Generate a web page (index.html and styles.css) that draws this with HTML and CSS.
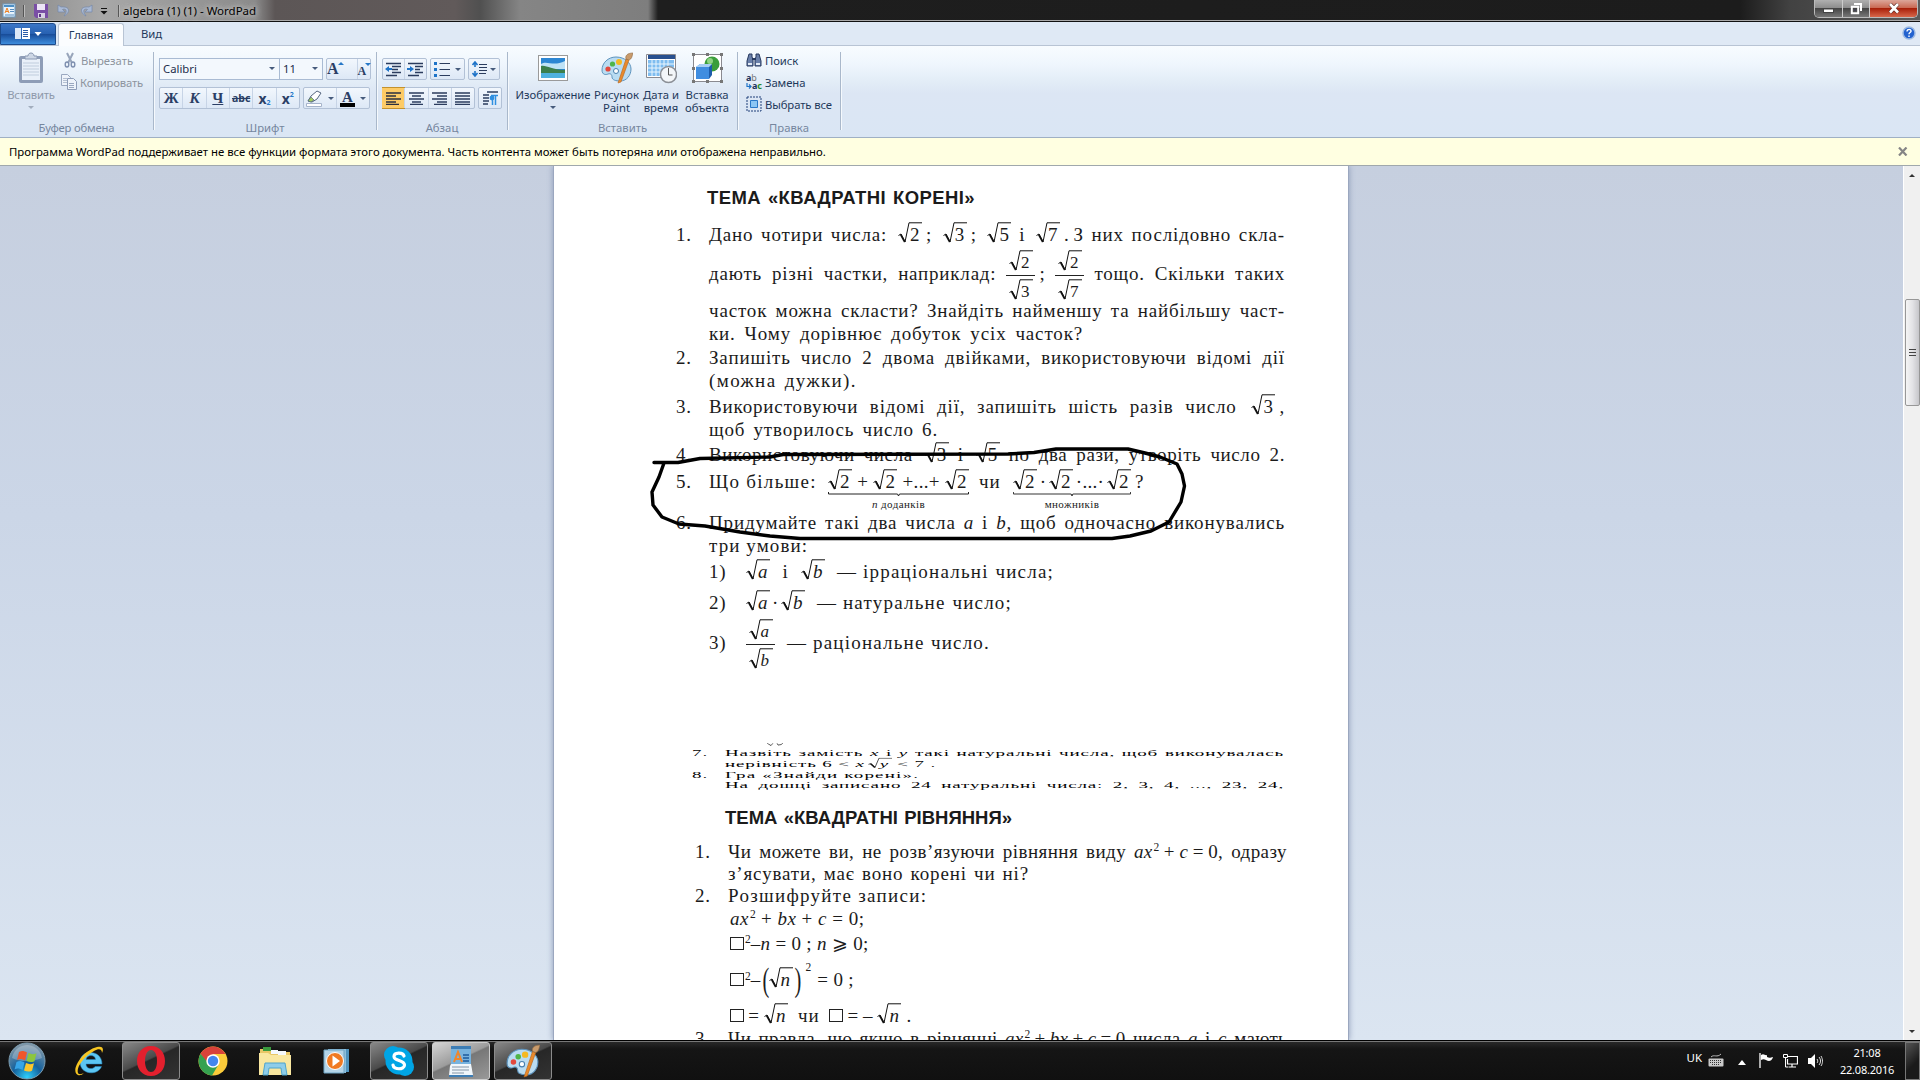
FILE: index.html
```html
<!DOCTYPE html>
<html lang="uk">
<head>
    <meta charset="UTF-8">
    <title>algebra (1) (1) - WordPad</title>
    <link rel="stylesheet" href="styles.css">
</head>
<body>
    <svg class="defs" width="0" height="0">
        <defs>
            <symbol id="root" viewBox="0 0 24 21"><path d="M.5 13.5 3 12l4 8L11 .8h13" fill="none" stroke="#111" stroke-width="1"/><path d="M2.6 12.4 6.8 20" stroke="#111" stroke-width="1.8"/></symbol>
            <symbol id="palette" viewBox="0 0 32 32"><path d="M15 5C7 5 1 11 1 18c0 5 4 5 6 4 3-1 4 1 4 3 0 3 4 4 8 4 7 0 11-6 11-12S24 5 15 5z" fill="#b9dcf2" stroke="#5d93bd"/><circle cx="7" cy="17" r="2.6" fill="#e2483d"/><circle cx="11.500" cy="12" r="2.600" fill="#4fb548"/><circle cx="18" cy="10" r="3" fill="#f5b921"/><circle cx="15" cy="19" r="2.500" fill="#fff" stroke="#4a80ae"/><path d="M17 31l3-1 8-22-3-1z" fill="#e98a2c" stroke="#b5651b" stroke-width=".6"/><path d="M25 7c-1-3 1-6 7-6-1 3-1 6-4 7z" fill="#c99b6c" stroke="#8f6a42" stroke-width=".6"/></symbol>
        </defs>
    </svg>
    <header class="titlebar">
        <svg class="app-icon" width="14" height="15" viewBox="0 0 14 15"><rect x="1" y="1" width="12" height="13" fill="#e8f3fb" stroke="#6d9cc4"/><path d="M2 2h10v2H2z" fill="#4c8fc6"/><path d="M3 10l2-5 2 5M4 8.500h2" stroke="#f08020" fill="none"/><path d="M8 6.500h4M8 8.500h4M3 12h9" stroke="#5a8ec0"/></svg>
        <i class="tsep"></i>
        <svg class="save" width="14" height="14" viewBox="0 0 14 14"><path d="M0 0h14v14H2l-2-2z" fill="#7a4fa5"/><path d="M3 0h8v6H3z" fill="#ece4f6"/><path d="M4 9h7v5H4z" fill="#d9d3e4"/><path d="M5 10h2v3H5z" fill="#5b3585"/></svg>
        <svg class="undo" width="14" height="14" viewBox="0 0 14 14"><path d="M1 1v7h7L5.500 5.500C9 4 11 7 7 12c6-3 7-10-3-9z" fill="#a9b9d4" stroke="#7488ab" stroke-width=".7"/></svg>
        <svg class="redo" width="14" height="14" viewBox="0 0 14 14"><path d="M13 1v7H6l2.500-2.500C5 4 3 7 7 12 1 9 0 2 10 3z" fill="#a9b9d4" stroke="#7488ab" stroke-width=".7"/></svg>
        <svg class="more" width="8" height="7" viewBox="0 0 8 7"><path d="M1 .5h6" stroke="#111"/><path d="M.5 3h7L4 6.500z" fill="#111"/></svg>
        <i class="tsep"></i>
        <span class="title">algebra (1) (1) - WordPad</span>
        <div class="controls">
            <button class="min"><svg width="12" height="6"><rect x=".5" y="1" width="10" height="3.500" fill="#fff" stroke="#444"/></svg></button>
            <button class="max"><svg width="12" height="12" viewBox="0 0 12 12"><path d="M4 1h7v7M1.800 3.800h6.400v6.400H1.800z" stroke="#fff" stroke-width="2" fill="none"/><path d="M4 6h2v2H4z" fill="#445"/></svg></button>
            <button class="close"><svg width="12" height="11" viewBox="0 0 12 11"><path d="M2 1l8 8.500M10 1L2 9.500" stroke="#5b2a25" stroke-width="4"/><path d="M2 1l8 8.500M10 1L2 9.500" stroke="#fff" stroke-width="2.600"/></svg></button>
        </div>
    </header>
    <nav class="tabs">
        <div class="file"><svg width="27" height="12" viewBox="0 0 27 12"><path d="M0 0h6v11H0z" fill="#dbe8f7"/><path d="M7 0h8v11H7z" fill="#fff"/><path d="M8 2.500h5M8 4.500h5M8 6.500h5M8 8.500h5" stroke="#2b5ca8"/><path d="M19.500 4h7L23 8z" fill="#fff"/></svg></div>
        <div class="tab active">Главная</div>
        <div class="tab">Вид</div>
        <svg class="help" width="14" height="14" viewBox="0 0 14 14"><circle cx="7" cy="7" r="6" fill="#2262cf" stroke="#9bb9e2" stroke-width="1.500"/><path d="M5 5.500c0-3 4.500-2.500 4-.2C8.700 6.600 7 6.500 7 8.300M7 9.400v1.600" stroke="#fff" stroke-width="1.400" fill="none"/></svg>
    </nav>
    <section class="ribbon">
        <div class="group clipboard">
            <div class="group-main">
                <div class="big paste">
                    <svg width="26" height="32" viewBox="0 0 26 32"><rect x="1" y="4" width="24" height="27" rx="2" fill="#8e9db7"/><path d="M4 7h18v21H4z" fill="#e9f0f9"/><path d="M5 11h16M5 14h16M5 17h16M5 20h16M5 23h16" stroke="#c0cddd"/><path d="M7 7V4h3c0-4 6-4 6 0h3v3z" fill="#cdd7e5" stroke="#8998b2"/></svg>
                    <span>Вставить</span><i class="arrow pale"></i>
                </div>
                <div class="stack gray">
                    <div><svg width="16" height="16" viewBox="0 0 16 16"><path d="M5 1l5 10M11 1L6 11" stroke="#98a5bb" stroke-width="2"/><ellipse cx="5" cy="12.500" rx="1.800" ry="2.500" fill="none" stroke="#7f90b0" stroke-width="1.400"/><ellipse cx="11" cy="12.500" rx="1.800" ry="2.500" fill="none" stroke="#7f90b0" stroke-width="1.400"/></svg><span>Вырезать</span></div>
                    <div class="copy"><svg width="16" height="16" viewBox="0 0 16 16"><path d="M.5.500h6l3 3v8h-9z" fill="#eef3fa" stroke="#9aa8c0"/><path d="M2 4.500h4M2 6.500h4M2 8.500h4" stroke="#b4c0d2"/><path d="M6.500 4.500h6l3 3v8h-9z" fill="#eef3fa" stroke="#8e9db8"/><path d="M8 9.500h5M8 11.500h5M8 13.500h5" stroke="#9aa8c0"/></svg><span>Копировать</span></div>
                </div>
            </div>
            <h6>Буфер обмена</h6>
        </div>
        <div class="group font">
            <div class="line first">
                <div class="combo name">Calibri<i class="arrow"></i></div><div class="combo size">11<i class="arrow"></i></div>
                <div class="btns grow"><b class="serif">A<i class="tri up"></i></b><b class="serif small">A<i class="tri"></i></b></div>
            </div>
            <div class="line">
                <div class="btns six"><b class="serif">Ж</b><b class="serif it">К</b><b class="serif un">Ч</b><b class="st">abc</b><b>x<sub>2</sub></b><b>x<sup>2</sup></b></div>
                <div class="btns colors"><b><svg width="17" height="17" viewBox="0 0 17 17"><path d="M2 11l3-5 6-5 4 2-4 6-5 3z" fill="#fff" stroke="#54657f"/><path d="M2 11l3-4 3 3-3 2z" fill="#a4cd5c" stroke="#54657f" stroke-width=".7"/><path d="M.5 13.500h15v3H.5z" fill="#fff" stroke="#a6b4ca"/></svg><i class="arrow"></i></b><b class="serif ink"><u>A</u><i class="arrow"></i></b></div>
            </div>
            <h6>Шрифт</h6>
        </div>
        <div class="group para">
            <div class="line first">
                <div class="btns two"><b><svg width="17" height="15" viewBox="0 0 17 15"><path d="M1 1.500h15M7 4.500h9M7 7.500h6M7 10.500h9M1 13.500h11" stroke="#2b3c5e" stroke-width="1.600"/><path d="M0 7l4-3v2h3v2H4v2z" fill="#1e73c8"/></svg></b><b><svg width="17" height="15" viewBox="0 0 17 15"><path d="M1 1.500h15M8 4.500h8M8 7.500h5M8 10.500h8M1 13.500h11" stroke="#2b3c5e" stroke-width="1.600"/><path d="M7 7L3 4v2H0v2h3v2z" fill="#1e73c8"/></svg></b></div>
                <div class="btns list"><b><svg width="16" height="15" viewBox="0 0 16 15"><path d="M0 1.500h3M0 7.500h3M0 13.500h3" stroke="#1e73c8" stroke-width="3"/><path d="M5.500 1.500H16M5.500 7.500H16M5.500 13.500H16" stroke="#2b3c5e"/></svg><i class="arrow"></i></b></div>
                <div class="btns list gap"><b><svg width="15" height="16" viewBox="0 0 15 16"><path d="M3 1v5M3 10v5M.5 4L3 1l2.500 3M.5 12L3 15l2.500-3" stroke="#1e73c8" stroke-width="1.600" fill="none"/><path d="M7 3.500h8M7 6.500h8M7 9.500h8M7 12.500h7" stroke="#2b3c5e" stroke-width="1.200"/></svg><i class="arrow"></i></b></div>
            </div>
            <div class="line">
                <div class="btns align"><b class="on"><svg width="15" height="13"><path d="M0 1h15M0 4h10M0 7h15M0 10h10M0 12.500h13" stroke="#2b3040" stroke-width="1.300"/></svg></b><b><svg width="15" height="13"><path d="M0 1h15M3 4h9M0 7h15M3 10h9M1 12.500h13" stroke="#2b3c5e" stroke-width="1.300"/></svg></b><b><svg width="15" height="13"><path d="M0 1h15M5 4h10M0 7h15M5 10h10M2 12.500h13" stroke="#2b3c5e" stroke-width="1.300"/></svg></b><b><svg width="15" height="13"><path d="M0 1h15M0 4h15M0 7h15M0 10h15M0 12.500h15" stroke="#2b3c5e" stroke-width="1.300"/></svg></b></div>
                <div class="btns mark"><b><svg width="15" height="14"><path d="M4 1h11M0 4h6M0 7h6M0 10h6M0 13h5" stroke="#2b3c5e" stroke-width="1.300"/><path d="M9.500 14V5M12.500 14V5M8 4.500h7" stroke="#2f8fe0" stroke-width="1.500"/><circle cx="9" cy="7" r="2.400" fill="#2f8fe0"/></svg></b></div>
            </div>
            <h6>Абзац</h6>
        </div>
        <div class="group insert">
            <div class="group-main">
                <div class="big picture"><svg width="30" height="32" viewBox="0 0 30 32"><rect x=".5" y="3.500" width="29" height="25" fill="#fff" stroke="#9a9a9a"/><path d="M3 6h24v20H3z" fill="#2c86d3"/><path d="M3 12c6-4 12 3 24-3v8H3z" fill="#bfe2f6"/><path d="M3 14c6-1 10 4 24 4v3H3z" fill="#3c7f4c"/><path d="M3 21h24v5H3z" fill="#4fb1dd"/></svg><span>Изображение</span><i class="arrow"></i></div>
                <div class="big"><svg width="32" height="32"><use href="#palette"/></svg><span>Рисунок</span><span>Paint</span></div>
                <div class="big"><svg width="32" height="32" viewBox="0 0 32 32"><path d="M1.500 2.500h29v23h-29z" fill="#fff" stroke="#8a8a90"/><path d="M3 3h27v4H3z" fill="#28508f"/><path d="M3 8h26v16H3z" fill="#7fbdf0"/><path d="M3 12h26M3 16h26M3 20h26M7 8v16M11 8v16M15 8v16M19 8v16M23 8v16" stroke="#e9f5fd"/><circle cx="23.500" cy="22.500" r="8" fill="#f3f6f9" stroke="#8b8f96" stroke-width="1.500"/><path d="M23.500 16v7h4" stroke="#555" fill="none"/></svg><span>Дата и</span><span>время</span></div>
                <div class="big"><svg width="32" height="32" viewBox="0 0 32 32"><path d="M2.500 2.500h28v27h-28z" fill="#fff" stroke="#8a8a90"/><path d="M1 1h3v3H1zM15 1h3v3h-3zM29 1h3v3h-3zM1 15h3v3H1zM29 15h3v3h-3zM1 28h3v3H1zM15 28h3v3h-3zM29 28h3v3h-3z" fill="#777"/><circle cx="21" cy="12" r="7.500" fill="#3a9e3c"/><circle cx="19" cy="9" r="3" fill="#8fd484"/><path d="M5 15l4-3h11l-2 3v12H5z" fill="#3f8de0"/><path d="M18 15l3-3v11l-3 4z" fill="#1d5cab"/><path d="M5 15l4-3h12l-3 3z" fill="#a6cef5"/></svg><span>Вставка</span><span>объекта</span></div>
            </div>
            <h6>Вставить</h6>
        </div>
        <div class="group edit">
            <div class="stack">
                <div><svg width="16" height="16" viewBox="0 0 16 16"><path d="M3 2h3v3l1 2v7H1V9zM10 2h3l2 7v5H9V7l1-2z" fill="#6a80aa" stroke="#26385e"/><path d="M2 11h4v2H2zM10 11h4v2h-4z" fill="#e3ebf7"/><path d="M6 7h4" stroke="#26385e" stroke-width="2"/></svg><span>Поиск</span></div>
                <div><span class="replace"><span><b>a</b>b</span><span class="to"><svg width="6" height="6" viewBox="0 0 6 6"><path d="M1 0v3.500h4M3 1.500l2 2-2 2" stroke="#1e73c8" stroke-width="1.200" fill="none"/></svg><b>a</b><em>c</em></span></span><span>Замена</span></div>
                <div><svg width="16" height="16" viewBox="0 0 16 16"><path d="M1 1h14v14H1z" fill="none" stroke="#1e3e78" stroke-dasharray="2 1"/><path d="M4.500 4.500h7v7h-7z" fill="#8cc6f4" stroke="#2a78c8"/></svg><span>Выбрать все</span></div>
            </div>
            <h6>Правка</h6>
        </div>
    </section>
    <div class="infobar"><span>Программа WordPad поддерживает не все функции формата этого документа. Часть контента может быть потеряна или отображена неправильно.</span><svg width="10" height="9" viewBox="0 0 10 9"><path d="M1 .5l7.500 8M8.500.500L1 8.500" stroke="#858585" stroke-width="2.200"/></svg></div>
    <main class="workspace">
        <article class="page">
            <h2 class="h1">ТЕМА «КВАДРАТНІ КОРЕНІ»</h2>
            <div class="task t1"><span class="num">1.</span><div class="body">
                <p class="r1">Дано чотири числа: <span class="keep"><span class="root"><svg><use href="#root"/></svg>2</span><span class="semi">;</span></span> <span class="keep"><span class="root"><svg><use href="#root"/></svg>3</span><span class="semi">;</span></span> <span class="root"><svg><use href="#root"/></svg>5</span> і <span class="keep"><span class="root"><svg><use href="#root"/></svg>7</span><span class="semi">.</span><span class="semi">З</span></span> них послідовно скла-</p>
                <p class="r2">дають різні частки, наприклад: <span class="keep"><span class="frac"><span class="root"><svg><use href="#root"/></svg>2</span><span class="root"><svg><use href="#root"/></svg>3</span></span><span class="semi">;</span></span> <span class="frac"><span class="root"><svg><use href="#root"/></svg>2</span><span class="root"><svg><use href="#root"/></svg>7</span></span> тощо. Скільки таких</p>
                <p class="r3">часток можна скласти? Знайдіть найменшу та найбільшу част-</p>
                <p class="r4">ки. Чому дорівнює добуток усіх часток?</p>
            </div></div>
            <div class="task t2"><span class="num">2.</span><div class="body">
                <p>Запишіть число 2 двома двійками, використовуючи відомі дії</p>
                <p class="r6">(можна дужки).</p>
            </div></div>
            <div class="task t3"><span class="num">3.</span><div class="body">
                <p>Використовуючи відомі дії, запишіть шість разів число <span class="keep"><span class="root"><svg><use href="#root"/></svg>3</span><span class="semi">,</span></span></p>
                <p class="r8">щоб утворилось число 6.</p>
            </div></div>
            <div class="task t4"><span class="num">4.</span><div class="body">
                <p class="r9">Використовуючи числа <span class="root"><svg><use href="#root"/></svg>3</span> і <span class="root"><svg><use href="#root"/></svg>5</span> по два рази, утворіть число 2.</p>
            </div></div>
            <div class="task t5"><span class="num">5.</span><div class="body">
                <div class="flexrow">
                    <span class="lead">Що більше:</span>
                    <span class="under sum"><span class="root"><svg><use href="#root"/></svg>2</span>+<span class="root"><svg><use href="#root"/></svg>2</span>+...+<span class="root"><svg><use href="#root"/></svg>2</span><svg class="brace" viewBox="0 0 141 5" preserveAspectRatio="none"><path d="M.5 0v2h69l1 2 1-2h69V0" fill="none" stroke="#222"/></svg><small><i>n</i> доданків</small></span>
                    <span class="or">чи</span>
                    <span class="under product"><span class="root"><svg><use href="#root"/></svg>2</span>·<span class="root"><svg><use href="#root"/></svg>2</span>·...·<span class="root"><svg><use href="#root"/></svg>2</span><svg class="brace" viewBox="0 0 141 5" preserveAspectRatio="none"><path d="M.5 0v2h69l1 2 1-2h69V0" fill="none" stroke="#222"/></svg><small>множників</small></span>
                    <span class="ask">?</span>
                </div>
            </div></div>
            <div class="task t6"><span class="num">6.</span><div class="body">
                <p>Придумайте такі два числа <i>a</i> і <i>b</i>, щоб одночасно виконувались</p>
                <p class="r12">три умови:</p>
                <div class="flexrow c1"><span class="lab">1)</span><span class="root"><svg><use href="#root"/></svg><i>a</i></span><span class="and">і</span><span class="root"><svg><use href="#root"/></svg><i>b</i></span><span class="dash">—</span><p>ірраціональні числа;</p></div>
                <div class="flexrow c2"><span class="lab">2)</span><span class="root"><svg><use href="#root"/></svg><i>a</i></span><span class="dot">·</span><span class="root"><svg><use href="#root"/></svg><i>b</i></span><span class="dash">—</span><p>натуральне число;</p></div>
                <div class="flexrow c3"><span class="lab">3)</span><span class="frac"><span class="root"><svg><use href="#root"/></svg><i>a</i></span><span class="root"><svg><use href="#root"/></svg><i>b</i></span></span><span class="dash">—</span><p>раціональне число.</p></div>
            </div></div>

            <div class="squashed">
                <svg class="scrap" width="16" height="7"><path d="M0 0l4 5 2-5M10 0l1 4 3-1 2-3" stroke="#222" fill="none"/></svg>
                <div class="task"><span class="num">7.</span><div class="body">
                    <p>Назвіть замість <i>x</i> і <i>y</i> такі натуральні числа, щоб виконувалась</p>
                    <p class="s2">нерівність 6 &lt; <i>x</i><span class="root"><svg><use href="#root"/></svg><i>y</i></span> &lt; 7 .</p>
                </div></div>
                <div class="task"><span class="num">8.</span><div class="body">
                    <p class="s3">Гра «Знайди корені».</p>
                    <p>На дошці записано 24 натуральні числа: 2, 3, 4, ..., 23, 24,</p>
                </div></div>
            </div>

            <div class="second">
                <h2 class="h2">ТЕМА «КВАДРАТНІ РІВНЯННЯ»</h2>
                <div class="task t7"><span class="num">1.</span><div class="body">
                    <p class="q1">Чи можете ви, не розв’язуючи рівняння виду <span class="keep eq"><i>ax</i><sup>2</sup> + <i>c</i> = 0</span>, одразу</p>
                    <p class="q2">з’ясувати, має воно корені чи ні?</p>
                </div></div>
                <div class="task"><span class="num">2.</span><div class="body">
                    <p class="q3">Розшифруйте записи:</p>
                    <p class="q4"><i>ax</i><sup>2</sup> + <i>bx</i> + <i>c</i> = 0;</p>
                    <p class="q5"><span class="box"></span><sup>2</sup>–<i>n</i> = 0 ; <i>n</i> ⩾ 0;</p>
                    <div class="flexrow q6"><span class="box"></span><sup>2</sup><span>–</span><span class="paren">(</span><span class="root"><svg><use href="#root"/></svg><i>n</i></span><span class="paren">)</span><sup class="high">2</sup><span class="res">= 0 ;</span></div>
                    <div class="flexrow q7"><span class="box"></span><span class="is">=</span><span class="root"><svg><use href="#root"/></svg><i>n</i></span><span class="or">чи</span><span class="box"></span><span class="minus">= –</span><span class="root"><svg><use href="#root"/></svg><i>n</i></span><span class="end">.</span></div>
                </div></div>
                <div class="task t10"><span class="num">3.</span><div class="body">
                    <p class="q8">Чи правда, що якщо в рівнянні <span class="keep eq"><i>ax</i><sup>2</sup> + <i>bx</i> + <i>c</i> = 0</span> числа <i>a</i> і <i>c</i> мають</p>
                </div></div>
            </div>
            <!-- pencil outline around task 5 -->
            <svg class="lasso" width="545" height="100" viewBox="648 444 545 100"><path d="M654 462.500H678L700 458.500 770 457 783 454.500 1008 454 1034 452.500 1056 449H1128L1145 453 1160 457 1177 464 1182 474 1184.500 486 1181 502 1169 522 1151 531 1130 536 1112 538.500H800L770 536 740 532 705 526 679 524 662 517 653 505 652 492 659 477 664 463" fill="none" stroke="#000" stroke-width="3.400" stroke-linejoin="round" stroke-linecap="round"/></svg>
        </article>
        <div class="scrollbar"><i class="tri up"></i><div class="thumb"><i></i><i></i><i></i></div><i class="tri"></i></div>
    </main>
    <footer class="taskbar">
        <div class="orb"><svg width="38" height="38" viewBox="0 0 38 38"><defs><radialGradient id="o" cx=".5" cy=".95" r=".9"><stop offset="0" stop-color="#2fd0fb"/><stop offset=".45" stop-color="#14609c"/><stop offset="1" stop-color="#7f97a8"/></radialGradient></defs><circle cx="19" cy="19" r="18" fill="url(#o)" stroke="#7d9db0"/><path d="M4 16C6 6 14 3 19 3s13 3 15 13c-8 3-20 5-30 0z" fill="#fff" opacity=".25"/><path d="M11 10c3-1.500 5-1 8 .5l-2 8c-3-1.500-5-2-8-.5z" fill="#f0572b"/><path d="M20.500 11c3 1.500 5 1.500 8 .2l-2 8c-3 1.300-5 1-8-.2z" fill="#8cc63e"/><path d="M8.500 20c3-1.500 5-1 8 .5l-2 7.500c-3-1.500-5-2-8-.5z" fill="#37a5e8"/><path d="M18 21c3 1.500 5 1.500 8 .2l-2 7.500c-3 1.300-5 1-8-.2z" fill="#fcc62c"/></svg></div>
        <div class="app"><svg width="32" height="32" viewBox="0 0 32 32"><path fill-rule="evenodd" d="M29 19H13c0 5 7 6 9 2.500h6.500C25 31 7 30 7 17S29 4 29 19zM13 14.500h9.500c0-5-8.500-5.500-9.500 0z" fill="#5cc6f2" stroke="#2286c4" stroke-width=".5"/><path d="M5 30C-3 27 8 6 24 2c6-1.500 7 2 5 6 0-4-3-5-8-2C10 12 3 23 5 28c1 2 4 1 6 0-2 2-4 2.500-6 2z" fill="#f7c622"/></svg></div>
        <div class="app open"><svg width="32" height="32" viewBox="0 0 32 32"><path fill-rule="evenodd" d="M16 1C7 1 2 8 2 16s5 15 14 15 14-7 14-15S25 1 16 1zm0 4c4 0 6 5 6 11s-2 11-6 11-6-5-6-11 2-11 6-11z" fill="#e3202e"/></svg></div>
        <div class="app"><svg width="30" height="30" viewBox="0 0 30 30"><circle cx="15" cy="15" r="14.500" fill="#fbcb3a"/><path d="M2.500 7.700A14.500 14.500 0 0 1 27.600 8H15l-6 11z" fill="#d8423a"/><path d="M2.500 7.700A14.500 14.500 0 0 0 14 29.500l6.500-11-10-1z" fill="#35a150"/><circle cx="15" cy="15" r="6.700" fill="#fff"/><circle cx="15" cy="15" r="5.200" fill="#4386ee"/></svg></div>
        <div class="app"><svg width="34" height="32" viewBox="0 0 34 32"><path d="M2 4h10l2 3h18v23H2z" fill="#e9c766"/><path d="M5 2h8v4H5z" fill="#3a9a3e"/><path d="M13 5h7v4h-7zM20 6h8v4h-8z" fill="#f4f8fb"/><path d="M1 8h9l3 2h20v20H1z" fill="#f9e7a0"/><path d="M5 30l2-12h20l2 12h-5l-1-7H11l-1 7z" fill="#8ecdea" stroke="#4fa4cc"/></svg></div>
        <div class="app"><svg width="28" height="28" viewBox="0 0 28 28"><path d="M8 2h18v23H8z" fill="#4f93bd"/><path d="M5 2h18v24H5z" fill="#8dbedb"/><path d="M1 3h20v23H1z" fill="#b4d4e7" stroke="#6ea4c4"/><circle cx="12" cy="14" r="8.500" fill="#f07a22" stroke="#fff"/><path d="M9.500 8.500v11L17 14z" fill="#fff"/></svg></div>
        <div class="app open"><svg width="32" height="32" viewBox="0 0 32 32"><circle cx="10" cy="10" r="9" fill="#00a5e5"/><circle cx="22" cy="22" r="9" fill="#00a5e5"/><circle cx="16" cy="16" r="13.500" fill="#00a5e5"/><path d="M21 11c-1-4-10-4-10 .5 0 5 10.500 3 10.500 8.500 0 5-11 5-11.500 0" fill="none" stroke="#fff" stroke-width="3.200" stroke-linecap="round"/></svg></div>
        <div class="app open current"><svg width="26" height="32" viewBox="0 0 26 32"><path d="M3 1h20v4H3z" fill="#3c7db5"/><path d="M3 4h20v21H3z" fill="#78b3de"/><path d="M2 21l1-2h20l2 11H1z" fill="#f0f6fb"/><path d="M6 17l4-10 4 10M7.500 14h5" stroke="#f0862c" stroke-width="2" fill="none"/><path d="M15 10h6M15 13h6M15 16h6" stroke="#1e5b9c" stroke-width="1.500"/><path d="M4 22h17M4 25h17M4 28h12" stroke="#8496a8" stroke-width="1.200"/><path d="M1 30h24v2H1z" fill="#3c7db5"/></svg></div>
        <div class="app open"><svg width="34" height="34"><use href="#palette"/></svg></div>
        <div class="tray">
            <span>UK</span>
            <svg class="kbd" width="16" height="14" viewBox="0 0 16 14"><path d="M3 4c3-3 6 1 10-3" stroke="#bbb" fill="none"/><rect x=".5" y="5.500" width="15" height="8" rx="1" fill="#c9c9c9"/><path d="M2 7.500h12M2 9.500h12M4 11.500h8" stroke="#333" stroke-dasharray="1 1"/></svg>
            <svg class="up" width="8" height="5"><path d="M0 5l4-5 4 5z" fill="#fff"/></svg>
            <svg class="flag" width="14" height="15" viewBox="0 0 14 15"><path d="M1 0v15" stroke="#fff" stroke-width="1.300"/><path d="M2 2c3-2 4 1 6 0v2c2 1 3 1 6 0-1 4-4 5-7 3-2-1-3-1-5 0z" fill="#fff"/></svg>
            <svg class="net" width="15" height="15" viewBox="0 0 15 15"><path d="M5 3.500h9.500v7.500H4.500V6M6 14h7M9 11v3" stroke="#fff" stroke-width="1.200" fill="none"/><path d="M.5 1.500h4v3h-4zM2.500 4v10h3" stroke="#fff" fill="none"/></svg>
            <svg class="snd" width="15" height="14" viewBox="0 0 15 14"><path d="M0 4h3l4-4v14l-4-4H0z" fill="#fff"/><path d="M9 5c1 1.500 1 3 0 4M11 3c2 2.500 2 5.500 0 8M13 2c2 3.500 2 7 0 10" stroke="#ddd" fill="none"/></svg>
            <div class="clock">21:08<br>22.08.2016</div>
            <div class="desk"></div>
        </div>
    </footer>
</body>
</html>
```
FILE: styles.css
```css
* {
    margin: 0;
    padding: 0;
    box-sizing: border-box;
}
body {
    width: 1920px;
    height: 1080px;
    overflow: hidden;
    display: flex;
    flex-direction: column;
    font-family: "Noto Sans", "Open Sans", sans-serif;
    font-size: 12px;
    color: #1e395b;
}
.defs { position: absolute; }
svg { flex: none; }
i { font-style: normal; }

/* title bar */
.titlebar {
    height: 22px;
    flex: none;
    display: flex;
    align-items: center;
    padding-left: 2px;
    border-bottom: 1px solid #111;
    box-shadow: inset 0 -1px #a9a9a9;
    background: linear-gradient(to right, #858585 0, #a8a8a8 100px, #8b8b8b 255px, #5c5656 275px, #615a5a 455px, #505050 480px, #858585 520px, #7e7e7e 648px, #1e1e1e 658px, #1c1c1c 1740px, #424242 1790px, #5b5b5b 1920px);
}
.tsep { width: 1px; height: 12px; background: #555; box-shadow: 1px 0 #bbb; }
.app-icon { margin-right: 7px; }
.save { margin-left: 10px; }
.undo { margin-left: 9px; }
.redo { margin-left: 8px; }
.more { margin: 2px 10px 0 7px; }
.title {
    margin-left: 4px;
    color: #000;
    font-size: 11.5px;
    text-shadow: 0 0 6px #ccc, 0 0 6px #ccc;
    white-space: nowrap;
}
.controls {
    display: flex;
    align-self: flex-start;
    margin-left: auto;
    margin-right: 2px;
    height: 18px;
    border: 1px solid #bbb;
    border-top: 0;
    border-radius: 0 0 5px 5px;
    overflow: hidden;
}
.controls button {
    width: 28px;
    border: 0;
    border-right: 1px solid #ccc;
    display: flex;
    align-items: center;
    justify-content: center;
    background: linear-gradient(#b0b0b0 0, #8b8b8b 48%, #454545 50%, #777 100%);
}
.controls .max { width: 27px; }
.controls .min svg { margin-top: 5px; }
.controls .close {
    width: 47px;
    border-right: 0;
    background: linear-gradient(#dca69a 0, #c96650 48%, #a8200a 50%, #d8674a 100%);
}

/* tabs */
.tabs {
    height: 24px;
    flex: none;
    display: flex;
    align-items: flex-end;
    background: #dfe9f5;
    border-bottom: 1px solid #b8c4d4;
}
.file {
    width: 56px;
    height: 22px;
    display: flex;
    align-items: center;
    justify-content: center;
    border: 1px solid #1c4b8c;
    border-radius: 0 3px 0 0;
    background: linear-gradient(#3b76c6 0, #2761b2 48%, #174a97 50%, #3d8ddd 100%);
}
.tab {
    height: 22px;
    line-height: 22px;
    padding: 0 17px;
    font-size: 11.3px;
}
.tab.active {
    margin: 0 0 -1px 2px;
    width: 66px;
    height: 23px;
    padding: 0;
    text-align: center;
    border: 1px solid #b8c4d4;
    border-bottom: 0;
    border-radius: 3px 3px 0 0;
    background: #fbfdff;
}
.help { margin: 0 4px 5px auto; }

/* ribbon */
.ribbon {
    height: 92px;
    flex: none;
    display: flex;
    padding-top: 6px;
    border-bottom: 1px solid #9fb0c4;
    background: linear-gradient(#f8fcff 0, #eff6fd 20%, #e3edf7 38%, #dce6f4 52%, #dae6f4 100%);
}
.group {
    position: relative;
    height: 78px;
    border-right: 1px solid #a9b8cb;
    box-shadow: 1px 0 #f5f9fd;
    flex: none;
}
.group h6 {
    position: absolute;
    left: 0;
    right: 0;
    bottom: -6px;
    text-align: center;
    font-size: 11.300px;
    font-weight: 400;
    line-height: 16px;
    color: #76869e;
}
.clipboard { width: 154px; }
.clipboard h6 { letter-spacing: -.2px; }
.font { width: 223px; }
.para { width: 131px; }
.insert { width: 230px; }
.edit { width: 103px; }
.group-main { display: flex; }
.big {
    display: flex;
    flex-direction: column;
    align-items: center;
    font-size: 11.300px;
    line-height: 13px;
    white-space: nowrap;
}
.big svg { margin-bottom: 4px; }
.big .arrow { margin-top: 5px; }
.paste { width: 62px; color: #8e99aa; letter-spacing: -.2px; }
.picture { width: 80px; }
.insert .group-main { padding-left: 5px; display: grid; grid-template-columns: 80px 47px 42px 50px; }
.stack { font-size: 11.300px; margin-top: -3px; }
.stack > div {
    height: 22px;
    display: flex;
    align-items: center;
    white-space: nowrap;
}
.stack svg { margin-right: 3px; }
.copy { margin-left: -1px; letter-spacing: -.2px; }
.edit .stack { padding-left: 8px; letter-spacing: -.1px; }
.gray { color: #8d949e; }
.replace {
    display: flex;
    flex-direction: column;
    width: 16px;
    margin-right: 3px;
    font-size: 9px;
    line-height: 8px;
    color: #777;
}
.to { display: flex; }
.stack .to svg { margin: 1px 0 0; }
.replace b { color: #1c335c; }
.replace em { color: #268a30; font-style: normal; font-weight: bold; }
.arrow {
    border: 3px solid transparent;
    border-top-color: #465b7c;
    border-bottom: 0;
    display: block;
}
.pale { border-top-color: #a2adbd; }
.line { display: flex; padding-left: 5px; height: 29px; }
.line.first { padding-top: 6px; height: 35px; }
.combo {
    height: 22px;
    display: flex;
    align-items: center;
    justify-content: space-between;
    padding: 0 4px 1px 3px;
    border: 1px solid #a9bbd3;
    background: #f3f8fd;
    font-size: 11.300px;
    color: #1d2e4c;
}
.name { width: 121px; }
.size { width: 43px; border-left: 0; }
.btns {
    height: 22px;
    display: flex;
    border: 1px solid #b2c1d6;
    border-radius: 2px;
    background: linear-gradient(#f2f7fd, #dde8f6);
    color: #2b3f66;
}
.btns b {
    flex: 1;
    display: flex;
    align-items: center;
    justify-content: center;
    gap: 5px;
    border-left: 1px solid #c7d4e6;
    font-size: 14px;
}
.btns b:first-child { border-left: 0; }
.btns .serif { font-family: "Liberation Serif", serif; font-size: 15px; }
.btns .small { font-size: 12px; padding-top: 4px; }
.grow { width: 45px; margin-left: 3px; }
.btns.grow b { gap: 0; }
.btns.grow .serif:first-child { font-size: 16px; }
.tri { border: 3px solid transparent; border-top-color: #2778c8; border-bottom: 0; align-self: flex-start; margin-top: 4px; }
.tri.up { border: 3px solid transparent; border-bottom-color: #2778c8; border-top: 0; }
.small .tri { margin-top: 0; }
.grow .tri { margin-left: -1px; }
.six { width: 141px; }
.it { font-style: italic; }
.un { text-decoration: underline; }
.btns .st { font-size: 10.500px; text-decoration: line-through; }
.btns.six b { gap: 0; }
.six sub, .six sup { font-size: 7px; color: #2778c8; }
.six sub { margin-top: 8px; }
.six sup { margin-top: -8px; }
.colors { width: 67px; margin-left: 3px; }
.ink u { text-decoration: none; line-height: 14px; border-bottom: 4px solid #000; padding: 0 2px; height: 17px; }
.two { width: 45px; }
.list { width: 35px; margin-left: 3px; }
.gap { width: 32px; }
.gap b { gap: 3px; }
.align { width: 93px; }
.align .on { background: #fdcb66; border: 1px solid #c3922e; margin: -1px; }
.mark { width: 24px; margin-left: 3px; }

.infobar {
    height: 28px;
    flex: none;
    display: flex;
    align-items: center;
    justify-content: space-between;
    padding: 0 12px 0 9px;
    background: #ffffe1;
    border-bottom: 1px solid #a0a8ac;
    font-size: 11.370px;
    color: #000;
}

/* document */
.workspace {
    height: 874px;
    flex: none;
    display: flex;
    overflow: hidden;
    background: linear-gradient(#c6cfdf, #cbd6e7 40%, #dbe5f1);
}
.page {
    position: relative;
    width: 796px;
    margin-left: 553px;
    background: #fff;
    border-left: 1px solid #9ba7bf;
    border-right: 1px solid #9ba7bf;
    box-shadow: 0 0 6px #8d9bb8;
    padding: 21px 0 0 122px;
    font-family: "Liberation Serif", serif;
    font-size: 19px;
    line-height: 22px;
    letter-spacing: .85px;
    color: #1b1b1b;
}
.page h2 {
    font-family: "Liberation Sans", sans-serif;
    font-size: 18.500px;
    line-height: 22px;
    letter-spacing: 0;
    white-space: nowrap;
    text-align-last: justify;
}
.page i { font-style: italic; }
.page .h1 { margin-left: 31px; width: 268px; letter-spacing: .4px; }
.task { display: flex; }
.num { width: 33px; flex: none; }
.body { width: 576px; }
.page p { height: 22px; text-align-last: justify; white-space: nowrap; }
.keep { white-space: nowrap; }
.semi { margin-left: 4px; }
.root {
    position: relative;
    display: inline-block;
    width: 24px;
    height: 22px;
    padding-left: 12px;
    letter-spacing: 0;
    flex: none;
    text-align-last: left;
}
.root svg { position: absolute; left: 0; top: -2px; width: 24px; height: 21px; }
p > .root, p > .keep > .root { margin-left: 3px; }
.frac {
    display: inline-flex;
    flex-direction: column;
    align-items: center;
    justify-content: center;
    width: 29px;
    height: 22px;
    vertical-align: top;
    font-size: 17px;
}
.frac .root { height: 24px; top: 5px; }
.frac .root:first-child { height: 27px; top: 3px; }
.frac .root + .root::before { content: ""; position: absolute; left: -3px; top: -6px; width: 29px; height: 1px; background: #222; }
.t1 { margin-top: 15px; }
.r2 { margin-top: 17px; letter-spacing: .8px; }
.r3 { margin-top: 15px; }
.page .r4 { margin-top: 1px; width: 374px; }
.t2 { margin-top: 2px; }
.r6 { margin-top: 1px; width: 148px; letter-spacing: 1.4px; }
.t3 { margin-top: 4px; }
.r8 { margin-top: 1px; width: 229px; }
.t4 { margin-top: 3px; }
.r9 { letter-spacing: .6px; }
.t5 { margin-top: 5px; }
.t6 { margin-top: 19px; }
.flexrow { display: flex; height: 22px; white-space: nowrap; }
.lead { width: 119px; letter-spacing: 1.3px; }
.under { position: relative; display: flex; justify-content: space-between; height: 22px; letter-spacing: .3px; }
.brace { position: absolute; left: 0; top: 21px; width: 100%; height: 5px; }
.under small {
    position: absolute;
    left: 0;
    right: 0;
    top: 26px;
    text-align: center;
    font-size: 11px;
    line-height: 14px;
    letter-spacing: .4px;
}
.sum { width: 141px; }
.product { width: 118px; }
.or { margin: 0 10px; }
.under + .or { width: 24px; }
.ask { margin-left: 4px; }
.r12 { width: 99px; margin-top: 1px; letter-spacing: 1.1px; }
.c1 { margin-top: 4px; }
.c2 { margin-top: 9px; }
.c3 { margin-top: 18px; }
.lab { width: 37px; }
.and { width: 31px; text-align: center; }
.dot { width: 11px; text-align: center; }
.dash { width: 18px; margin: 0 8px 0 12px; letter-spacing: 0; }
.flexrow p { letter-spacing: 1.2px; }
.c1 p { width: 191px; }
.c2 p { width: 169px; }
.c3 p { width: 177px; }

/* flattened picture fragment */
.squashed {
    position: relative;
    width: 595px;
    height: 88px;
    margin: 94px 0 -49px 16px;
    transform: scaleY(.487);
    transform-origin: top;
    color: #000;
}
.squashed .num { letter-spacing: 1px; }
.squashed .body { width: 559px; }
.scrap { position: absolute; left: 75px; top: -10px; }
.s2 { width: 199px; }
.s3 { width: 194px; letter-spacing: 1.2px; }

.second { padding-left: 19px; }
.second .body { width: 559px; }
.second .h2 { margin: 20px 0 0 30px; width: 287px; }
.t7 { margin-top: 12px; }
.page sup { font-size: 11.500px; line-height: 0; vertical-align: 7px; letter-spacing: 0; margin-left: 1px; }
.eq { word-spacing: -3px; letter-spacing: .2px; }
.q1 { letter-spacing: .45px; }
.q2 { width: 301px; }
.q3 { width: 195px; letter-spacing: 1.3px; }
.q4 { width: 127px; margin: 1px 0 0 2px; letter-spacing: .5px; }
.q5 { width: 138px; margin: 3px 0 0 2px; letter-spacing: .3px; }
.q8 { letter-spacing: .3px; }
.box { display: inline-block; width: 14px; height: 13px; border: 1px solid #222; }
.q6 { margin: 14px 0 0 2px; letter-spacing: .3px; }
.flexrow .box { margin-top: 4px; }
.flexrow sup { line-height: 14px; }
.paren { font-size: 34px; transform: scaleX(.6); width: 8px; letter-spacing: 0; }
.flexrow .high { margin: -9px 6px 0 5px; }
.q7 { margin: 14px 0 0 2px; }
.is { width: 20px; text-align: center; }
.q7 .box + .minus { margin-left: 4px; width: 30px; letter-spacing: 0; }
.end { margin-left: 5px; }
.t10 { margin-top: 1px; }
.lasso { position: absolute; left: 94px; top: 278px; }

.scrollbar {
    width: 17px;
    margin-left: auto;
    display: flex;
    flex-direction: column;
    align-items: center;
    background: #f0f0f0;
    border-left: 1px solid #fff;
}
.scrollbar .tri { border-top-color: #333; align-self: center; margin: auto 0 7px; }
.scrollbar .up { border-top-color: transparent; border-bottom-color: #333; margin: 8px 0 0; }
.thumb {
    width: 15px;
    height: 107px;
    margin-top: 122px;
    display: flex;
    flex-direction: column;
    gap: 2px;
    align-items: center;
    justify-content: center;
    border: 1px solid #979797;
    border-radius: 2px;
    background: linear-gradient(to right, #f5f5f5, #e3e3e6 50%, #c6c6ca);
}
.thumb i { width: 7px; height: 1px; background: #444; }

/* taskbar */
.taskbar {
    height: 40px;
    flex: none;
    display: flex;
    gap: 4px;
    border-top: 1px solid #000;
    box-shadow: inset 0 1px #777;
    background: linear-gradient(#2b2b2b 0, #151515 8px, #101010 100%);
}
.orb { width: 56px; display: flex; align-items: center; justify-content: center; padding-right: 2px; }
.app { width: 58px; height: 38px; margin-top: 1px; display: flex; align-items: center; justify-content: center; border: 1px solid transparent; border-radius: 3px; }
.app.open {
    border-color: #8b8b8b;
    background: linear-gradient(155deg, #888 0, #4a4a4a 45%, #272727 48%, #333 100%);
}
.app.current { background: linear-gradient(155deg, #d5d5d5 0, #9c9c9c 45%, #777 48%, #999 100%); border-color: #ccc; }
.tray {
    margin-left: auto;
    display: flex;
    align-items: center;
    color: #fff;
}
.kbd { margin: -2px 14px 0 6px; }
.tray > span { margin-top: -6px; font-size: 11.500px; }
.up { margin: 3px 13px 0 0; }
.flag { margin-right: 10px; }
.net { margin-right: 10px; }
.clock { width: 76px; margin-left: 6px; text-align: center; font-size: 11px; letter-spacing: -.2px; line-height: 17px; }
.desk { width: 15px; height: 38px; border: 1px solid #777; background: linear-gradient(135deg, #555, #1a1a1a 60%); }
```
